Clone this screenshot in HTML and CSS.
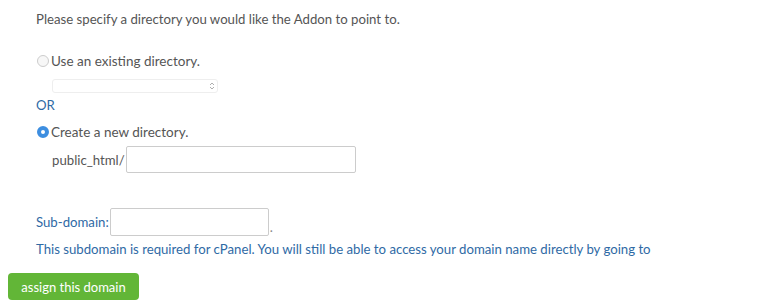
FILE: index.html
```html
<!DOCTYPE html>
<html lang="en">
<head>
    <meta charset="UTF-8">
    <meta name="viewport" content="width=device-width, initial-scale=1.0">
    <title>Addon Domain</title>
    <link rel="stylesheet" href="styles.css">
</head>
<body>
    <form class="addon-form">
        <div class="form-body">
            <p class="intro">Please specify a directory you would like the Addon to point to.</p>

            <label class="radio-row first">
                <input type="radio" name="dir" class="radio">
                Use an existing directory.
            </label>
            <div class="select-row">
                <select class="dir-select"><option></option></select>
            </div>

            <div class="or">OR</div>

            <label class="radio-row">
                <input type="radio" name="dir" class="radio" checked>
                Create a new directory.
            </label>
            <div class="path-row">
                <span class="path-label">public_html/</span>
                <input type="text" class="path-input">
            </div>

            <div class="sub-row">
                <label for="subdomain" class="sub-label">Sub-domain:</label>
                <input type="text" id="subdomain" class="sub-input">
                <span class="dot">.</span>
            </div>
            <p class="help">This subdomain is required for cPanel. You will still be able to access your domain name directly by going to</p>
        </div>
        <button type="button" class="assign-button">assign this domain</button>
    </form>
</body>
</html>
```

FILE: styles.css
```css
body {
    margin: 0;
    font-family: Lato, "Open Sans", sans-serif;
    font-size: 13.2px;
    color: #555;
    background-color: #fff;
}
.addon-form {
    padding: 10px 0 0 8px;
}
.form-body {
    padding-left: 28px;
}
.intro {
    margin: 0;
    line-height: 18px;
}
.radio-row {
    display: flex;
    align-items: center;
    height: 18px;
    font-size: 13.5px;
}
.radio-row.first {
    margin-top: 24px;
}
.radio {
    appearance: none;
    -webkit-appearance: none;
    box-sizing: border-box;
    width: 12px;
    height: 12px;
    margin: 0 2px 0 1px;
    border: 1px solid #ccc;
    border-radius: 50%;
    background-color: #f7f7f7;
}
.radio:checked {
    border: 4px solid #3d8ee0;
    background-color: #fff;
}
.select-row {
    padding: 9px 0 0 16px;
}
.dir-select {
    appearance: none;
    -webkit-appearance: none;
    display: block;
    width: 166px;
    height: 14px;
    border: 1px solid #eee;
    border-radius: 3px;
    background: #fff url("data:image/svg+xml;utf8,<svg xmlns='http://www.w3.org/2000/svg' width='6' height='10'><path d='M1 4 L3 2 L5 4 M1 6 L3 8 L5 6' fill='none' stroke='%23999' stroke-width='0.8'/></svg>") no-repeat 156px 1px;
}
.or {
    margin-top: 3px;
    line-height: 18px;
    color: #2f6aa5;
}
.or + .radio-row {
    margin-top: 9px;
}
.path-row {
    display: flex;
    align-items: center;
    gap: 1px;
    margin-top: 5px;
    padding-left: 16px;
}
.path-input {
    width: 230px;
    height: 27px;
    box-sizing: border-box;
    border: 1px solid #ccc;
    border-radius: 2px;
}
.sub-row {
    display: flex;
    align-items: center;
    gap: 1px;
    margin-top: 35px;
    color: #2f6aa5;
}
.sub-input {
    width: 159px;
    height: 28px;
    box-sizing: border-box;
    border: 1px solid #ccc;
    border-radius: 2px;
}
.dot {
    align-self: flex-end;
    line-height: 18px;
    color: #888;
}
.help {
    margin: 3px 0 0;
    line-height: 20px;
    color: #2f6aa5;
}
.assign-button {
    margin-top: 14px;
    width: 131px;
    height: 27px;
    border: none;
    border-radius: 4px;
    background-color: #62b637;
    color: #fff;
    font-family: Lato, "Open Sans", sans-serif;
    font-size: 13px;
    cursor: pointer;
}
```
